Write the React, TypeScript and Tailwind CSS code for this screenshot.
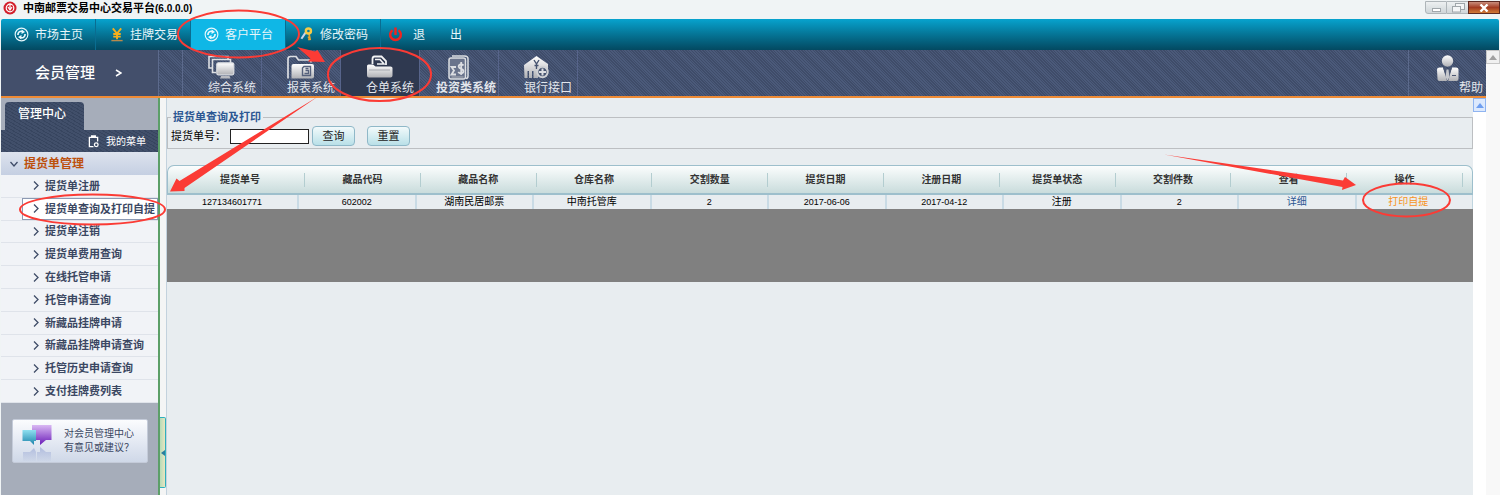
import type { ReactNode } from "react";
import clsx from "clsx";

function CycleIcon() {
  return (
    <svg viewBox="0 0 16 16" className="h-[15px] w-[15px]" fill="none" stroke="#e8f8fc">
      <circle cx="8" cy="8" r="6.8" strokeWidth="1.2" />
      <path d="M4.200 8.600C4 5.600 6.400 4 9 4.700M11.800 7.400C12 10.400 9.600 12 7 11.300" strokeWidth="1.800" />
      <path d="M8.200 2.600l3.600 2.800-3.800 2zM7.800 13.400l-3.600-2.800 3.800-2z" fill="#e8f8fc" stroke="none" />
    </svg>
  );
}

function YenIcon() {
  return (
    <svg viewBox="0 0 14 16" className="h-[15px] w-[14px]" fill="none" stroke="#f5ae1b">
      <path d="M2.500 1.500L7 7l4.500-5.500M7 6.500V13M3 7.500h8M3 10.200h8" strokeWidth="2" />
      <path d="M1 14.500h12" stroke="#b98a4c" strokeWidth="1.500" />
    </svg>
  );
}

function KeyIcon() {
  return (
    <svg viewBox="0 0 14 16" className="h-[15px] w-[14px]" fill="none">
      <path d="M5.500 6L1 12.500" stroke="#c9d4ec" strokeWidth="2.200" />
      <path d="M9 6.500L10.500 14M9.800 11h-2M10.200 13.200h-2" stroke="#e8a22a" strokeWidth="1.800" />
      <circle cx="8.500" cy="4.300" r="2.700" stroke="#f7cb45" strokeWidth="2.600" />
    </svg>
  );
}

function PowerIcon() {
  return (
    <svg viewBox="0 0 16 16" className="h-[15px] w-[15px]" fill="none" stroke="#f0241f">
      <path d="M4.800 3.400a5.700 5.700 0 1 0 6.400 0" strokeWidth="2.600" />
      <path d="M8 .5v8" strokeWidth="2.600" />
    </svg>
  );
}

function IconFill({ id }: { id: string }) {
  return (
    <defs>
      <linearGradient id={id} x1="0" y1="0" x2="0" y2="1">
        <stop offset="0" stopColor="#ffffff" />
        <stop offset="1" stopColor="#b0b1b5" />
      </linearGradient>
    </defs>
  );
}

function ScreensIcon() {
  return (
    <svg viewBox="0 0 27 25" className="h-[25px] w-[27px]" fill="none" stroke="#dcdee2">
      <IconFill id="screens" />
      <path d="M5 13H1V1.500h19V4" strokeWidth="1.600" />
      <path d="M8 17.500H4.500V4.500h18V8" strokeWidth="1.600" />
      <rect x="8.800" y="7.800" width="17" height="12" rx="1.500" fill="url(#screens)" strokeWidth="1.200" />
      <path d="M13 21h8.500l1 2.500H12z" fill="#b8bac0" stroke="none" />
    </svg>
  );
}

function ReportIcon() {
  return (
    <svg viewBox="0 0 27 25" className="h-[25px] w-[27px]" fill="none" stroke="#dcdee2">
      <IconFill id="report" />
      <path d="M1 23.500V4q0-2.500 2.500-2.500H9L11.500 5H22q2 0 2 2.500" strokeWidth="1.700" />
      <path d="M4.500 11q0-2 2-2H25q2 0 2 2v10.500q0 2-2 2H4.500z" fill="url(#report)" stroke="none" />
      <path d="M15.500 13l1.500-1.500h6.500v9h-8z" stroke="#56617c" strokeWidth="1.400" />
      <path d="M17.500 18.500h4v-3h-3M18.500 13.500h3" stroke="#56617c" strokeWidth="1.300" />
    </svg>
  );
}

function WarehouseIcon() {
  return (
    <svg viewBox="0 0 27 25" className="h-[25px] w-[27px]" fill="none" stroke="#f2f3f5">
      <IconFill id="warehouse" />
      <path d="M6.500 9V4q0-2.500 2-2.500h7L20 6v4" strokeWidth="1.800" />
      <path d="M9 4.500h5l4 4.500h-7" strokeWidth="1.600" />
      <path d="M1 11q0-1.500 1.500-1.500H7l2.500 2h15q2 0 2 1.500v7.500q0 2-2 2H3q-2 0-2-2z" fill="url(#warehouse)" stroke="none" />
      <path d="M3 15h21" stroke="#a4a7ae" />
    </svg>
  );
}

function InvestIcon() {
  return (
    <svg viewBox="0 0 21 25" className="h-[25px] w-[21px]" fill="none" stroke="#dcdee2">
      <path d="M4 1h12.500q3.500 0 3.500 3v17q0 2.500-2 2.500" strokeWidth="1.500" />
      <rect x="1" y="3" width="16.500" height="21" rx="2" fill="#6a748c" strokeWidth="1.500" />
      <path d="M8 12H3.500L6 15.500l-2.500 4H8" strokeWidth="1.800" />
      <path d="M15.500 10.500q-1-1.500-3-1.200-2 .5-1.800 2.400.2 1.600 2.400 2.200 2.400.6 2.400 2.500-.3 2-2.500 2-1.800 0-2.800-1.400M13.200 7v13" strokeWidth="1.800" />
      <path d="M3.500 22h12" stroke="#aeb1b8" />
    </svg>
  );
}

function BankIcon() {
  return (
    <svg viewBox="0 0 25 25" className="h-[25px] w-[25px]">
      <IconFill id="bank" />
      <path d="M0 10L12.500 1 24 9v6h-5l-5 3v5H9.500v-7H8v7H5v-7H3.500v7H.5z" fill="url(#bank)" />
      <path d="M10 5l2.500 4L15 5M12.500 9v5M10.500 10.500h4" fill="none" stroke="#46536f" strokeWidth="1.400" />
      <circle cx="18.500" cy="17" r="5.200" fill="#46536f" stroke="#cfd1d5" strokeWidth="2" />
      <path d="M18.500 13.500v7M15 17h7" stroke="#dddfe3" strokeWidth="2" />
    </svg>
  );
}

function PersonIcon() {
  return (
    <svg viewBox="0 0 23 27" className="h-[27px] w-[23px]">
      <IconFill id="person" />
      <circle cx="11.500" cy="6" r="5.700" fill="url(#person)" />
      <path d="M1 14.500q0-2 2.500-2H7l4.500 13 4.500-13h4q2.500 0 2.500 2V24q0 2-2 2h-17q-2 0-2-2z" fill="url(#person)" />
      <path d="M7 12.500L11 26h1.200L16 12.500h-2.500l-2 4-2-4z" fill="#4b5772" />
      <path d="M10.500 14.500h2L13.500 22l-2 3.500-2-3.500z" fill="#c5c7cc" />
      <path d="M16 20.500h4" stroke="#4b5772" />
    </svg>
  );
}

function ChatIcon() {
  return (
    <svg viewBox="0 0 30 38" className="mt-1 h-[38px] w-[30px] shrink-0">
      <defs>
        <linearGradient id="purple" x1="0" y1="0" x2="0" y2="1">
          <stop offset="0" stopColor="#d9b8f3" />
          <stop offset="1" stopColor="#6a1cb8" />
        </linearGradient>
        <linearGradient id="cyan" x1="0" y1="0" x2="0" y2="1">
          <stop offset="0" stopColor="#8fe0f0" />
          <stop offset="1" stopColor="#1c83ab" />
        </linearGradient>
        <linearGradient id="mirror" x1="0" y1="0" x2="0" y2="1">
          <stop offset="0" stopColor="#8f9fd0" stopOpacity=".6" />
          <stop offset="1" stopColor="#8f9fd0" stopOpacity=".05" />
        </linearGradient>
      </defs>
      <path d="M10 1h19.500v15H24l-6 5v-5h-8z" fill="url(#purple)" />
      <path d="M.5 6H14v11h-2v4l-4-4H.5z" fill="url(#cyan)" />
      <path d="M1 28h7l4-4 2 4v9H1zM15 28h3v-5l6 5h5v9H15z" fill="url(#mirror)" />
    </svg>
  );
}

const navItems: { label: string; icon: ReactNode; active?: boolean }[] = [
  { label: "市场主页", icon: <CycleIcon /> },
  { label: "挂牌交易", icon: <YenIcon /> },
  { label: "客户平台", icon: <CycleIcon />, active: true },
  { label: "修改密码", icon: <KeyIcon /> },
];

const systems: { label: string; icon: ReactNode; active?: boolean; strong?: boolean }[] = [
  { label: "综合系统", icon: <ScreensIcon /> },
  { label: "报表系统", icon: <ReportIcon /> },
  { label: "仓单系统", icon: <WarehouseIcon />, active: true },
  { label: "投资类系统", icon: <InvestIcon />, strong: true },
  { label: "银行接口", icon: <BankIcon /> },
];

const menu = [
  "提货单注册",
  "提货单查询及打印自提",
  "提货单注销",
  "提货单费用查询",
  "在线托管申请",
  "托管申请查询",
  "新藏品挂牌申请",
  "新藏品挂牌申请查询",
  "托管历史申请查询",
  "支付挂牌费列表",
];

const columns = [
  "提货单号",
  "藏品代码",
  "藏品名称",
  "仓库名称",
  "交割数量",
  "提货日期",
  "注册日期",
  "提货单状态",
  "交割件数",
  "查看",
  "操作",
];

const row = [
  "127134601771",
  "602002",
  "湖南民居邮票",
  "中南托管库",
  "2",
  "2017-06-06",
  "2017-04-12",
  "注册",
  "2",
];

const hatch =
  "bg-[#46536f] bg-[repeating-linear-gradient(45deg,#3f4c69_0px,#3f4c69_1px,#4b5a7a_1px,#4b5a7a_2px)]";
const weave =
  "bg-[#3d4b66] bg-[repeating-linear-gradient(30deg,#37455f_0px,#37455f_1px,#414f6a_1px,#414f6a_3px)]";
const formButton =
  "h-5 w-[43px] rounded-[4px] border border-[#8fb8c8] bg-linear-to-b from-[#f2fafb] to-[#b9e0e8] text-[11px] leading-4 text-[#222]";

function TitleBar() {
  return (
    <header className="flex h-[19px] items-start justify-between bg-[#f0f4f5] pl-[3px]">
      <div className="flex h-4 items-center gap-[6px]">
        <svg viewBox="0 0 14 14" className="h-[14px] w-[14px]">
          <circle cx="7" cy="7" r="6.500" fill="#d3202c" />
          <circle cx="7" cy="7" r="3.800" fill="none" stroke="#fff" strokeWidth="1.200" />
          <path d="M7 2.500v5M5 6l2 3 2-3" fill="none" stroke="#fff" strokeWidth="1.200" />
        </svg>
        <h1 className="text-[11px] font-bold leading-4 text-black">
          中南邮票交易中心交易平台<span className="text-[10px]">(6.0.0.0)</span>
        </h1>
      </div>
      <div className="mt-px flex h-[13px]">
        <button aria-label="最小化" className="flex w-[22px] items-center justify-center rounded-bl-[3px] border border-[#aeb5b9] bg-linear-to-b from-[#edf0f1] to-[#cfd6d9]">
          <span className="mt-1 h-1 w-[9px] border border-[#a0a7ab] bg-white" />
        </button>
        <button aria-label="还原" className="flex w-[21px] items-center justify-center border-y border-[#aeb5b9] bg-linear-to-b from-[#edf0f1] to-[#cfd6d9]">
          <svg viewBox="0 0 14 10" className="h-[10px] w-[14px]" fill="#f4f6f7" stroke="#a0a7ab">
            <rect x="4.500" y=".5" width="9" height="6" />
            <rect x="1.500" y="3.500" width="8" height="5.500" />
          </svg>
        </button>
        <button aria-label="关闭" className="flex w-8 items-center justify-center border border-[#5d2a22] bg-linear-to-b from-[#c98d7c] via-[#a33c22] to-[#d17a35]">
          <svg viewBox="0 0 10 8" className="h-2 w-[10px]" stroke="#fff" strokeWidth="2.400">
            <path d="M1.500 .5l7 7M8.500 .5l-7 7" />
          </svg>
        </button>
      </div>
    </header>
  );
}

function MainNav() {
  return (
    <nav className="mx-px flex h-[31px] rounded-t-[2px] bg-linear-to-b from-[#07a3ce] to-[#034961] text-xs text-[#e6f6fa]">
      {navItems.map((item) => (
        <a
          key={item.label}
          href="#"
          className={clsx(
            "flex w-[95px] items-center gap-[6px] border-r border-[#0a6d91] pl-[13px]",
            item.active && "bg-[#0fb7e6]",
          )}
        >
          <span className="flex w-[15px] justify-center">{item.icon}</span>
          {item.label}
        </a>
      ))}
      <a href="#" className="flex items-center gap-[10px] pl-[7px]">
        <PowerIcon />
        <span className="flex gap-[25px]">
          <span>退</span>
          <span>出</span>
        </span>
      </a>
    </nav>
  );
}

function SystemBar() {
  return (
    <div className={clsx("ml-px flex h-12 border-b-2 border-[#ef8b35] text-xs text-[#e3e6ec]", hatch)}>
      <div className="flex w-[158px] items-center gap-5 border-r border-[#5c6a8c] bg-[#434f6b] pl-[34px] text-[15px] font-medium text-white">
        会员管理
        <svg viewBox="0 0 7 8" className="h-2 w-[7px]" fill="none" stroke="#fff" strokeWidth="1.500">
          <path d="M1 1l5 3-5 3" />
        </svg>
      </div>
      <div className="w-6 border-r border-[#5c6a8c]" />
      {systems.map((item) => (
        <a
          key={item.label}
          href="#"
          className={clsx(
            "flex w-[79px] flex-col border-r border-[#57648a] pt-[5px]",
            item.strong ? "pl-4 font-bold" : "pl-[25px]",
            item.active && "bg-[#2f3950]",
          )}
        >
          <span className={clsx(item.strong && "pl-3")}>{item.icon}</span>
          <span className="whitespace-nowrap leading-4">{item.label}</span>
        </a>
      ))}
      <a href="#" className="ml-auto flex w-[78px] items-end border-l border-[#5c6a8c] pl-[27px]">
        <span className="self-start pt-[5px]">
          <PersonIcon />
        </span>
        <span className="leading-4">帮助</span>
      </a>
    </div>
  );
}

function Sidebar() {
  return (
    <aside className="ml-px flex w-[159px] shrink-0 flex-col border-r-2 border-[#5c9f68] bg-[#a6adba]">
      <div className="px-1 pt-1">
        <h2 className={clsx("h-7 w-[79px] rounded-t-[4px] pl-[13px] text-xs font-medium leading-6 text-white", weave)}>
          管理中心
        </h2>
      </div>
      <a href="#" className={clsx("flex h-[22px] items-center justify-end gap-[7px] pr-3 text-[10px] text-white", weave)}>
        <svg viewBox="0 0 12 14" className="h-[13px] w-[11px]" fill="none" stroke="#fff" strokeWidth="1.400">
          <path d="M6 12.500H1.500V2.500h9V7M4 2.500V1h4v1.500" />
          <circle cx="9" cy="10.500" r="2" />
        </svg>
        我的菜单
      </a>
      <h3 className="flex h-[23px] items-center gap-[6px] bg-linear-to-b from-[#dde3ee] to-[#c5cfe2] pl-[9px] text-xs font-bold text-[#bd500c]">
        <svg viewBox="0 0 8 6" className="h-[6px] w-2" fill="none" stroke="#3f4c68" strokeWidth="1.300">
          <path d="M.5 1L4 5l3.500-4" />
        </svg>
        提货单管理
      </h3>
      <ul className="grid h-[228px] auto-rows-fr bg-[#f1f3f7] text-[11px] font-bold text-[#3b4762]">
        {menu.map((label, i) => (
          <li key={label} className="flex border-b border-[#dfe3ea]">
            <a
              href="#"
              className={clsx(
                "ml-[21px] flex flex-1 items-center gap-[6px] whitespace-nowrap border pl-[10px] leading-4",
                i === 1 ? "border-[#8d9ab3] bg-white" : "border-transparent",
              )}
            >
              <svg viewBox="0 0 6 9" className="h-[9px] w-[6px]" fill="none" stroke="#3f4c68" strokeWidth="1.300">
                <path d="M1 .5l4 4-4 4" />
              </svg>
              {label}
            </a>
          </li>
        ))}
      </ul>
      <button className="ml-[11px] mt-4 flex h-11 w-[136px] items-center gap-3 whitespace-nowrap rounded-[2px] border border-[#c4cbd9] bg-linear-to-b from-[#fbfcfe] to-[#cfd8e8] pl-[9px] text-left text-[10px] leading-[14px] text-[#3b4762]">
        <ChatIcon />
        <span>
          对会员管理中心
          <br />
          有意见或建议？
        </span>
      </button>
    </aside>
  );
}

function SearchForm() {
  return (
    <fieldset className="h-[39px] border border-[#bcbfc2] pl-[3px]">
      <legend className="px-[2px] text-[11px] font-bold leading-[14px] text-[#2c5793]">提货单查询及打印</legend>
      <div className="flex items-center pt-[2px] text-[11px]">
        <label htmlFor="bill" className="w-[59px] leading-4">
          提货单号：
        </label>
        <input id="bill" type="text" className="h-[15px] w-[79px] border border-[#222] bg-white px-1" />
        <button className={clsx(formButton, "ml-[3px]")}>查询</button>
        <button className={clsx(formButton, "ml-3")}>重置</button>
      </div>
    </fieldset>
  );
}

function BillTable() {
  return (
    <table className="mt-4 block w-full text-center">
      <thead className="block rounded-t-[7px] border border-b-2 border-[#9dbfcc] bg-linear-to-b from-[#fbfdfd] to-[#c9dcdc]">
        <tr className="flex h-[27px] items-center pr-[9px] text-[10px] text-[#333]">
          {columns.map((name, i) => (
            <th
              key={name}
              className={clsx("h-[14px] border-r border-[#b3cdd0] leading-[14px]", i === 0 ? "w-[137px] pl-2" : "flex-1")}
            >
              {name}
            </th>
          ))}
        </tr>
      </thead>
      <tbody className="block border-r border-[#c0d5df]">
        <tr className="flex h-[14px] text-[10px] leading-[14px] text-black">
          {row.map((value, i) => (
            <td
              key={i}
              className={clsx(
                "border-r-2 border-[#c9dbe5]",
                i === 0 ? "w-[132px]" : "w-0 flex-1",
                /^[\d-]+$/.test(value) && "text-[9px]",
              )}
            >
              {value}
            </td>
          ))}
          <td className="w-0 flex-1 border-r-2 border-[#c9dbe5]">
            <a href="#" className="text-[#2c5793]">
              详细
            </a>
          </td>
          <td className="w-0 flex-1">
            <a href="#" className="pr-3 text-[#f7941e]">
              打印自提
            </a>
          </td>
        </tr>
      </tbody>
    </table>
  );
}

// Hand-drawn hints that point out the steps to follow
function Hints() {
  return (
    <>
      <svg className="pointer-events-none absolute left-0 top-0 h-[240px] w-[450px]" fill="none" stroke="#fb3b35" strokeWidth="2">
        <ellipse cx="238.500" cy="34" rx="60.500" ry="23.500" />
        <ellipse cx="379.500" cy="74.500" rx="51.500" ry="26.500" />
        <ellipse cx="92.500" cy="209.500" rx="72.500" ry="15" />
        <g fill="#fb3b35" stroke="none">
          <path d="M297 47L315 51.500 317.500 50 325 62 308 61.500 310.500 58.500z" />
          <path d="M318 96.500L184.500 188 184.500 191 170 191.500 176.500 178.500 179.500 181z" />
        </g>
      </svg>
      <svg className="pointer-events-none absolute right-0 top-0 h-[240px] w-[350px]" fill="none" stroke="#fb3b35" strokeWidth="2">
        <ellipse cx="256.500" cy="200" rx="43.500" ry="16.500" />
        <path d="M14 154.500L193 180.500 195 177 206 185 192 190 192.500 187z" fill="#fb3b35" stroke="none" />
      </svg>
    </>
  );
}

export default function App() {
  return (
    <div className="relative flex min-h-screen flex-col bg-[#f0f4f5] font-['Liberation_Sans','Noto_Sans_CJK_SC',sans-serif]">
      <TitleBar />
      <MainNav />
      <div className="flex flex-1">
        <div className="flex min-w-0 flex-1 flex-col">
          <SystemBar />
          <div className="flex flex-1">
            <Sidebar />
            <div className="flex w-[6px] shrink-0 flex-col justify-end bg-[#f4f5f5] pb-[7px]">
              <button aria-label="收起菜单" className="flex h-[71px] items-center justify-center rounded-r-[2px] border border-l-0 border-[#2fb0bd] bg-linear-to-r from-[#b5dbb8] to-[#e8e6c0]">
                <svg viewBox="0 0 4 6" className="h-[6px] w-1" fill="#2b7d9e">
                  <path d="M4 0v6L0 3z" />
                </svg>
              </button>
            </div>
            <main className="min-w-0 flex-1 border-l border-[#c3d2dd] bg-[#e8edf0] pt-3">
              <SearchForm />
              <BillTable />
              <div className="h-[73px] bg-[#808080]" />
            </main>
            <div className="w-[13px] shrink-0 bg-white">
              <button aria-label="向上滚动" className="flex h-[14px] w-full items-center justify-center border border-[#8fb4f0] bg-[#dce9fd]">
                <svg viewBox="0 0 8 5" className="h-[5px] w-2" fill="#6f9ff0">
                  <path d="M4 0l4 5H0z" />
                </svg>
              </button>
            </div>
          </div>
        </div>
        <div className="w-[14px] shrink-0 bg-[#f8f8f8]">
          <button aria-label="页面向上滚动" className="flex h-[14px] w-full items-center justify-center border border-[#c6c6c6] bg-[#f0f0f0]">
            <svg viewBox="0 0 8 5" className="h-[5px] w-2" fill="#a0a0a0">
              <path d="M4 0l4 5H0z" />
            </svg>
          </button>
        </div>
      </div>
      <Hints />
    </div>
  );
}
